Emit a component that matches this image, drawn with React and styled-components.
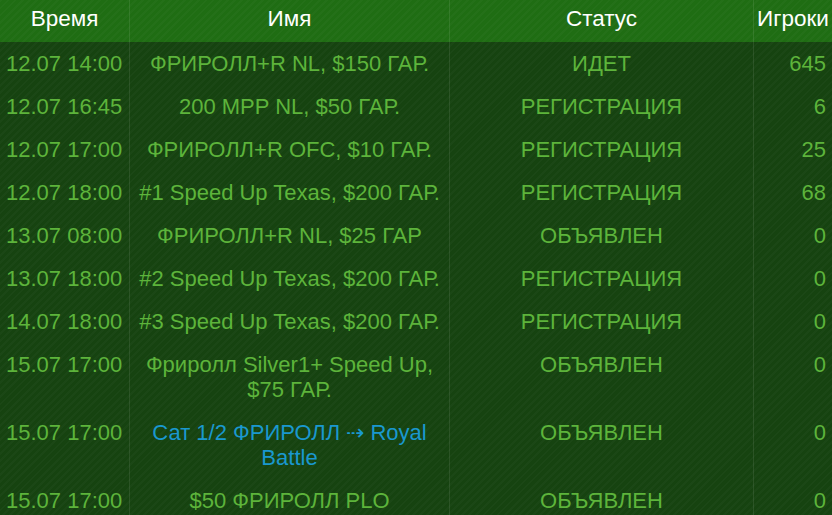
import styled, { createGlobalStyle } from "styled-components";

const GlobalStyle = createGlobalStyle`
  html, body {
    margin: 0;
    padding: 0;
    background: #164310;
    overflow: hidden;
  }
`;

const COLS = "129px 320px 304px 79px";

const stripes = `repeating-linear-gradient(
  135deg,
  rgba(255, 255, 255, 0.025) 0px,
  rgba(255, 255, 255, 0.025) 2px,
  rgba(0, 0, 0, 0) 2px,
  rgba(0, 0, 0, 0) 5px
)`;

const Board = styled.div`
  width: 832px;
  font-family: "Liberation Sans", Arial, sans-serif;
  background: ${stripes}, #164310;
  min-height: 515px;
`;

const HeadRow = styled.div`
  display: grid;
  grid-template-columns: ${COLS};
  height: 42px;
  background: ${stripes}, #1f6d13;
`;

const HeadCell = styled.div`
  display: flex;
  align-items: center;
  justify-content: center;
  color: #ffffff;
  font-size: 22.5px;
  padding-bottom: 4px;
  border-left: ${(p) => (p.$first ? "none" : "1px solid rgba(255,255,255,0.09)")};
`;

const Row = styled.div`
  display: grid;
  grid-template-columns: ${COLS};
`;

const Cell = styled.div`
  padding: 9px 6px;
  font-size: 22px;
  line-height: 25px;
  color: ${(p) => (p.$link ? "#1a98cf" : "#5db43b")};
  text-align: ${(p) => p.$align || "center"};
  border-left: ${(p) => (p.$first ? "none" : "1px solid rgba(255,255,255,0.09)")};
  white-space: ${(p) => (p.$nowrap ? "nowrap" : "normal")};
`;

const rows = [
  ["12.07 14:00", "ФРИРОЛЛ+R NL, $150 ГАР.", "ИДЕТ", "645"],
  ["12.07 16:45", "200 MPP NL, $50 ГАР.", "РЕГИСТРАЦИЯ", "6"],
  ["12.07 17:00", "ФРИРОЛЛ+R OFC, $10 ГАР.", "РЕГИСТРАЦИЯ", "25"],
  ["12.07 18:00", "#1 Speed Up Texas, $200 ГАР.", "РЕГИСТРАЦИЯ", "68"],
  ["13.07 08:00", "ФРИРОЛЛ+R NL, $25 ГАР", "ОБЪЯВЛЕН", "0"],
  ["13.07 18:00", "#2 Speed Up Texas, $200 ГАР.", "РЕГИСТРАЦИЯ", "0"],
  ["14.07 18:00", "#3 Speed Up Texas, $200 ГАР.", "РЕГИСТРАЦИЯ", "0"],
  ["15.07 17:00", "Фриролл Silver1+ Speed Up, $75 ГАР.", "ОБЪЯВЛЕН", "0"],
  ["15.07 17:00", "Сат 1/2 ФРИРОЛЛ ⇢ Royal Battle", "ОБЪЯВЛЕН", "0", true],
  ["15.07 17:00", "$50 ФРИРОЛЛ PLO", "ОБЪЯВЛЕН", "0"],
];

export default function App() {
  return (
    <>
      <GlobalStyle />
      <Board>
        <HeadRow>
          <HeadCell $first>Время</HeadCell>
          <HeadCell>Имя</HeadCell>
          <HeadCell>Статус</HeadCell>
          <HeadCell>Игроки</HeadCell>
        </HeadRow>
        {rows.map(([time, name, status, players, link], i) => (
          <Row key={i}>
            <Cell $first $align="left" $nowrap>{time}</Cell>
            <Cell $link={link}>{name}</Cell>
            <Cell>{status}</Cell>
            <Cell $align="right">{players}</Cell>
          </Row>
        ))}
      </Board>
    </>
  );
}
